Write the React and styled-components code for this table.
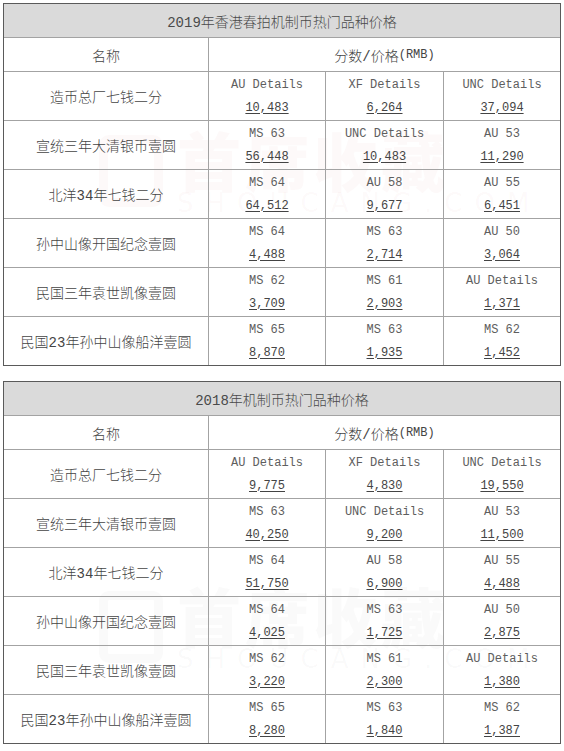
import React from 'react';
import styled, { createGlobalStyle } from 'styled-components';

const GlobalStyle = createGlobalStyle`
  html, body {
    margin: 0;
    padding: 0;
    background: #fff;
  }
  body {
    font-family: "Liberation Mono", "Noto Sans CJK SC", monospace;
    color: #444;
  }
`;

const Page = styled.div`
  padding: 3px 0 0 3px;
  display: flex;
  flex-direction: column;
  gap: 15px;
`;

const TableWrap = styled.div`
  position: relative;
  width: 556px;
  border: 1px solid #5a5a5a;
  display: grid;
  grid-template-columns: 205px 117px 118px 116px;
  grid-template-rows: 34px 34px repeat(5, 49px) 48px;
  overflow: hidden;
`;

const Cell = styled.div`
  box-sizing: border-box;
  border-right: ${(p) => (p.$lastCol ? 'none' : '1px solid #a3a3a3')};
  border-bottom: ${(p) => (p.$lastRow ? 'none' : '1px solid #a3a3a3')};
  display: flex;
  align-items: center;
  justify-content: center;
  grid-column: ${(p) => p.$span || 'auto'};
  font-size: 14px;
  font-weight: 300;
  position: relative;
  z-index: 1;
`;

const TitleCell = styled(Cell)`
  background: #dadada;
  color: #4a4a4a;
`;

const Small = styled.span`
  font-size: 12px;
`;

const Values = styled(Cell)`
  flex-direction: column;
  gap: 7px;
  font-size: 12px;
  font-weight: 400;
`;

const Grade = styled.span`
  line-height: 16px;
  color: #5e5e5e;
`;

const Price = styled.span`
  line-height: 16px;
  text-decoration: underline;
  text-underline-offset: 2px;
  color: #444;
`;

const Watermark = styled.div`
  position: absolute;
  left: 95px;
  top: ${(p) => p.$top}px;
  display: flex;
  align-items: center;
  gap: 14px;
  pointer-events: none;
  z-index: 0;
  color: ${(p) => p.$color};
  font-family: "Noto Sans CJK SC", sans-serif;
`;

const MarkBox = styled.div`
  width: 64px;
  height: 72px;
  border: 9px solid currentColor;
  border-radius: 10px;
  box-sizing: border-box;
`;

const MarkText = styled.div`
  display: flex;
  flex-direction: column;
  line-height: 1;
`;

const MarkBig = styled.span`
  font-size: 64px;
  font-weight: 900;
  letter-spacing: 4px;
`;

const MarkSmall = styled.span`
  font-size: 26px;
  letter-spacing: 12px;
  font-family: "DejaVu Sans", sans-serif;
`;

const tables = [
  {
    title: '2019年香港春拍机制币热门品种价格',
    mark: { top: 122, color: 'rgba(215, 120, 120, 0.045)' },
    rows: [
      ['造币总厂七钱二分', ['AU Details', '10,483'], ['XF Details', '6,264'], ['UNC Details', '37,094']],
      ['宣统三年大清银币壹圆', ['MS 63', '56,448'], ['UNC Details', '10,483'], ['AU 53', '11,290']],
      ['北洋34年七钱二分', ['MS 64', '64,512'], ['AU 58', '9,677'], ['AU 55', '6,451']],
      ['孙中山像开国纪念壹圆', ['MS 64', '4,488'], ['MS 63', '2,714'], ['AU 50', '3,064']],
      ['民国三年袁世凯像壹圆', ['MS 62', '3,709'], ['MS 61', '2,903'], ['AU Details', '1,371']],
      ['民国23年孙中山像船洋壹圆', ['MS 65', '8,870'], ['MS 63', '1,935'], ['MS 62', '1,452']],
    ],
  },
  {
    title: '2018年机制币热门品种价格',
    mark: { top: 200, color: 'rgba(120, 120, 120, 0.035)' },
    rows: [
      ['造币总厂七钱二分', ['AU Details', '9,775'], ['XF Details', '4,830'], ['UNC Details', '19,550']],
      ['宣统三年大清银币壹圆', ['MS 63', '40,250'], ['UNC Details', '9,200'], ['AU 53', '11,500']],
      ['北洋34年七钱二分', ['MS 64', '51,750'], ['AU 58', '6,900'], ['AU 55', '4,488']],
      ['孙中山像开国纪念壹圆', ['MS 64', '4,025'], ['MS 63', '1,725'], ['AU 50', '2,875']],
      ['民国三年袁世凯像壹圆', ['MS 62', '3,220'], ['MS 61', '2,300'], ['AU Details', '1,380']],
      ['民国23年孙中山像船洋壹圆', ['MS 65', '8,280'], ['MS 63', '1,840'], ['MS 62', '1,387']],
    ],
  },
];

const PriceTable = ({ title, rows, mark }) => (
  <TableWrap>
    <Watermark $top={mark.top} $color={mark.color}>
      <MarkBox />
      <MarkText>
        <MarkBig>首席收藏</MarkBig>
        <MarkSmall>SHOUCANG.COM</MarkSmall>
      </MarkText>
    </Watermark>
    <TitleCell $span="1 / -1" $lastCol>{title}</TitleCell>
    <Cell>名称</Cell>
    <Cell $span="2 / -1" $lastCol>
      分数/价格<Small>(RMB)</Small>
    </Cell>
    {rows.map(([name, ...vals], i) => {
      const lastRow = i === rows.length - 1;
      return (
        <React.Fragment key={name}>
          <Cell $lastRow={lastRow}>{name}</Cell>
          {vals.map(([grade, price], j) => (
            <Values key={j} $lastRow={lastRow} $lastCol={j === vals.length - 1}>
              <Grade>{grade}</Grade>
              <Price>{price}</Price>
            </Values>
          ))}
        </React.Fragment>
      );
    })}
  </TableWrap>
);

const App = () => (
  <>
    <GlobalStyle />
    <Page>
      {tables.map((t) => (
        <PriceTable key={t.title} {...t} />
      ))}
    </Page>
  </>
);

export default App;
